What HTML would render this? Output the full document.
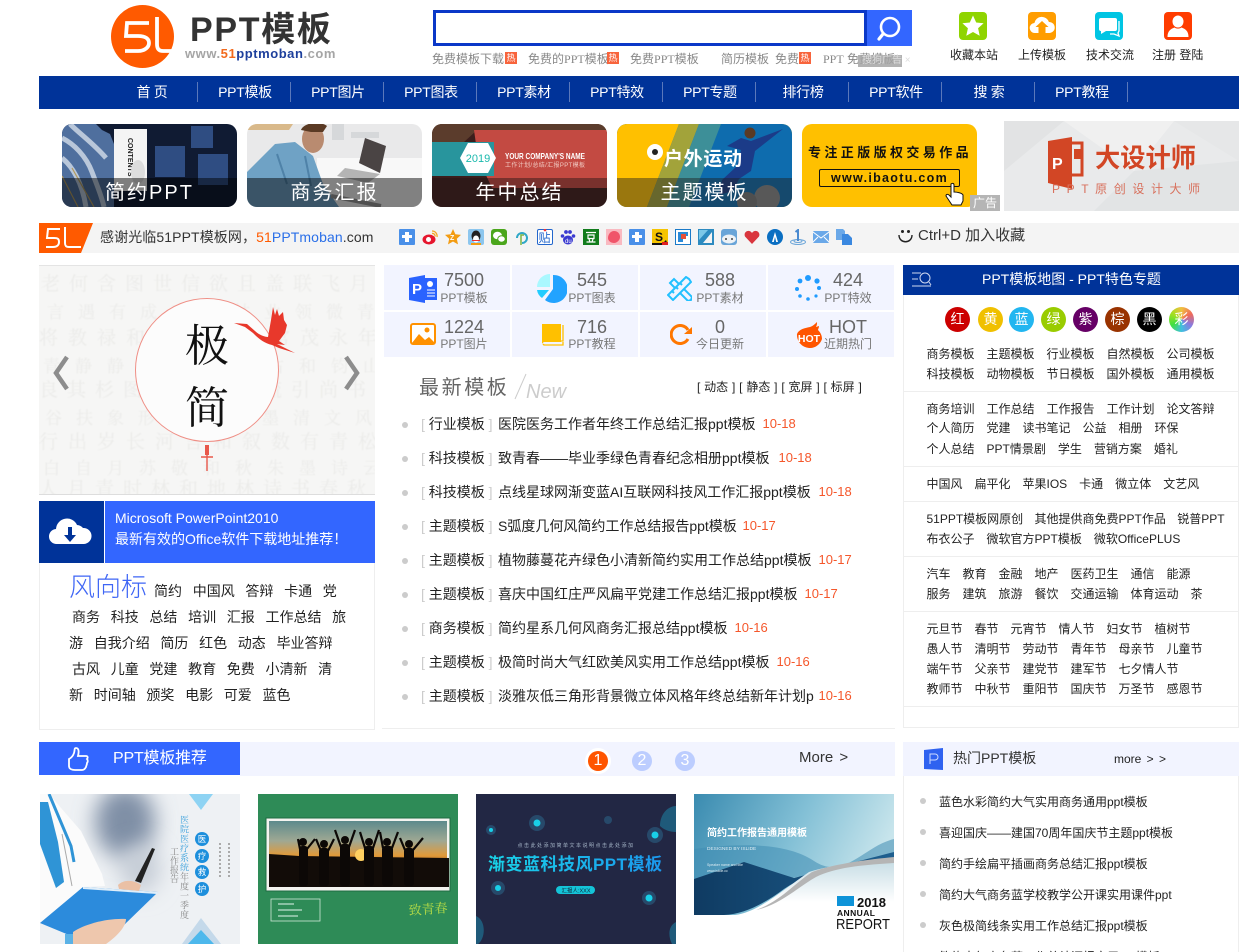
<!DOCTYPE html>
<html lang="zh"><head><meta charset="utf-8"><title>PPT模板</title>
<style>
html,body{margin:0;padding:0;background:#fff;overflow:hidden}
body{width:1257px;height:952px;position:relative;font-family:"Liberation Sans","Noto Sans CJK SC",sans-serif;color:#222;font-size:12px}
.t{position:absolute;white-space:nowrap;line-height:20px;height:20px}
.b{position:absolute}
svg{position:absolute;display:block;overflow:hidden}
.nav{color:#fff;font-size:14px;transform:translateX(-50%);letter-spacing:-.3px}
.sep{position:absolute;top:82px;height:20px;width:1px;background:#5a78bb}
.cap{position:absolute;left:0;right:0;bottom:0;height:29px;background:rgba(0,0,0,.48);color:#fff;text-align:center;font-size:20px;line-height:31px;letter-spacing:2px}
.card{position:absolute;top:124px;width:175px;height:83px;border-radius:10px;overflow:hidden}
.hot{position:absolute;top:52px;width:12px;height:12px;background:#f8643c;color:#fff;font-size:9px;line-height:12px;text-align:center}
.g{color:#888;font-size:12px}
.cell{position:absolute;width:126px;height:45px;background:#f2f4ff}
.n{font-size:18px;color:#666;transform:translateX(-50%)}
.lb{font-size:12px;color:#777;transform:translateX(-50%)}
.sc{width:16px;height:16px;top:229px}
.li{font-size:14px;color:#222}
.li i{font-style:normal;color:#ccc}
.li s{text-decoration:none;position:absolute;left:341.5px;top:0;color:#f5572b;font-size:13px}
.d{position:absolute;width:6px;height:6px;border-radius:50%;background:#ccc;left:402px}
.c{position:absolute;top:307px;width:25px;height:25px;border-radius:50%;color:#fff;font-size:14px;line-height:25px;text-align:center}
.m{font-size:12px;word-spacing:8.67px;left:926.5px;color:#222}
.w{font-size:14px;word-spacing:6.8px;color:#222}
.hr{position:absolute;left:904px;width:334px;height:1px;background:#eee}
.h{font-size:12px;color:#222;left:939px}
.hd{position:absolute;left:920px;width:6px;height:6px;border-radius:50%;background:#ccc}
</style></head><body>

<!-- logo -->
<div class="b" style="left:111px;top:5px;width:63px;height:63px;border-radius:50%;background:#ff5a00"></div>
<svg style="left:111px;top:5px" width="63" height="63" viewBox="0 0 63 63"><path d="M38 18H16l-1 13h12c8 0 11 3 11 7s-4 8-11 8H14M46 12v27c0 5 2 7 6 7h11" fill="none" stroke="#fff" stroke-width="3.800"/></svg>
<div class="t" style="left:190px;top:12px;height:36px;line-height:36px;font-size:34px;font-weight:bold;color:#333;letter-spacing:1.700px">PPT模板</div>
<div class="t" style="left:185px;top:44px;font-size:13px;font-weight:bold;color:#a5a5a5;letter-spacing:.55px">www.<span style="color:#f26a1d">51</span><span style="color:#1d3f9c">pptmoban</span>.com</div>

<!-- search -->
<div class="b" style="left:433px;top:10px;width:428px;height:30px;border:3px solid #0a38c8;background:#fff"></div>
<div class="b" style="left:867px;top:10px;width:45px;height:36px;background:#3366ff"></div>
<svg style="left:867px;top:10px" width="45" height="36" viewBox="0 0 45 36"><circle cx="23" cy="17" r="9" fill="none" stroke="#fff" stroke-width="2.600"/><path d="M16 24l-4 5" stroke="#fff" stroke-width="3.200" stroke-linecap="round"/></svg>
<div class="t g" style="left:432px;top:49px">免费模板下载</div><div class="hot" style="left:505px">热</div>
<div class="t g" style="left:528px;top:49px">免费的<span style="font-family:'Liberation Serif',serif">PPT</span>模板</div><div class="hot" style="left:607px">热</div>
<div class="t g" style="left:630px;top:49px">免费<span style="font-family:'Liberation Serif',serif">PPT</span>模板</div>
<div class="t g" style="left:721px;top:49px">简历模板</div>
<div class="t g" style="left:775px;top:49px">免费</div><div class="hot" style="left:799px">热</div>
<div class="t g" style="left:823px;top:49px"><span style="font-family:'Liberation Serif',serif">PPT</span></div>
<div class="t g" style="left:847px;top:49px">免费模板</div>
<div class="b" style="left:858px;top:55px;width:44px;height:12px;background:rgba(165,165,165,.85)"></div>
<div class="t" style="left:862px;top:51px;color:#ddd;font-size:10px">搜狗广告 ×</div>

<!-- top right icons -->
<svg style="left:959px;top:12px" width="28" height="28" viewBox="0 0 28 28"><rect width="28" height="28" rx="4" fill="#8fd400"/><path d="M14 3.500l3.200 7 7.400.8-5.500 5 1.600 7.400L14 20l-6.700 3.700 1.600-7.400-5.500-5 7.400-.8z" fill="#fff"/></svg>
<svg style="left:1028px;top:12px" width="28" height="28" viewBox="0 0 28 28"><rect width="28" height="28" rx="4" fill="#ff9d00"/><path d="M7 21a5 5 0 0 1-.6-10 7.500 7.500 0 0 1 14.500-1 5.500 5.500 0 0 1 .6 11h-4v-6h3l-6.500-6-6.500 6h3v6z" fill="#fff"/></svg>
<svg style="left:1095px;top:12px" width="28" height="28" viewBox="0 0 28 28"><rect width="28" height="28" rx="4" fill="#00c5e3"/><path d="M6 6h14a2 2 0 0 1 2 2v9a2 2 0 0 1-2 2h-9l-5 3v-3a2 2 0 0 1-2-2V8a2 2 0 0 1 2-2z" fill="#fff"/><path d="M24 9v10l-1 2 1 3-5-2h-4" fill="none" stroke="#fff" stroke-width="1.300"/></svg>
<svg style="left:1164px;top:12px" width="28" height="28" viewBox="0 0 28 28"><rect width="28" height="28" rx="4" fill="#ff3c00"/><ellipse cx="14" cy="9.500" rx="5.500" ry="6" fill="#fff"/><path d="M3.500 25c0-6 3-8 7-9.500 2 1.500 5 1.500 7 0 4 1.500 7 3.500 7 9.500z" fill="#fff"/></svg>
<div class="t" style="left:950px;top:45px">收藏本站</div>
<div class="t" style="left:1018px;top:45px">上传模板</div>
<div class="t" style="left:1086px;top:45px">技术交流</div>
<div class="t" style="left:1152px;top:45px">注册 登陆</div>

<!-- nav -->
<div class="b" style="left:39px;top:76px;width:1200px;height:33px;background:#003399"></div>
<div class="t nav" style="left:152px;top:82px">首 页</div>
<div class="t nav" style="left:245px;top:82px">PPT模板</div>
<div class="t nav" style="left:338px;top:82px">PPT图片</div>
<div class="t nav" style="left:431px;top:82px">PPT图表</div>
<div class="t nav" style="left:524px;top:82px">PPT素材</div>
<div class="t nav" style="left:617px;top:82px">PPT特效</div>
<div class="t nav" style="left:710px;top:82px">PPT专题</div>
<div class="t nav" style="left:803px;top:82px">排行榜</div>
<div class="t nav" style="left:896px;top:82px">PPT软件</div>
<div class="t nav" style="left:989px;top:82px">搜 索</div>
<div class="t nav" style="left:1082px;top:82px">PPT教程</div>
<div class="sep" style="left:197px"></div><div class="sep" style="left:290px"></div><div class="sep" style="left:383px"></div><div class="sep" style="left:476px"></div><div class="sep" style="left:569px"></div><div class="sep" style="left:662px"></div><div class="sep" style="left:755px"></div><div class="sep" style="left:848px"></div><div class="sep" style="left:941px"></div><div class="sep" style="left:1034px"></div><div class="sep" style="left:1127px"></div>

<!-- cards -->
<div class="card" style="left:62px;background:#101b33">
<svg width="175" height="83" viewBox="0 0 175 83"><path d="M0 0h34l6 6 8 4 4 10v63H0z" fill="#4f6f9e"/><path d="M0 14c12 6 24 18 30 34s10 25 12 35M0 34c10 8 20 24 24 49M8 0c10 10 24 20 36 34" stroke="#b9c7da" stroke-width="5" fill="none"/><path d="M0 52l16 31M10 44l22 39" stroke="#b59b5c" stroke-width="1.200" fill="none"/><rect x="52" y="5" width="33" height="62" fill="#f4f4f4"/><text x="66" y="14" transform="rotate(90 66 14)" font-size="7" font-weight="bold" fill="#222">CONTENTS</text><ellipse cx="76" cy="48" rx="7" ry="12" fill="#ddd"/><rect x="93" y="22" width="30" height="31" fill="#2f4d82"/><rect x="129" y="2" width="22" height="22" fill="#2f4d82"/><rect x="136" y="30" width="30" height="31" fill="#2f4d82"/></svg>
<div class="cap">简约PPT</div></div>
<div class="card" style="left:247px;background:#e9e9ea">
<svg width="175" height="83" viewBox="0 0 175 83"><path d="M0 0h46l-4 6H0z" fill="#d9b98a"/><path d="M85 0h12v16H85zM104 8h28v6h-28z" fill="#d6d8da"/><rect x="70" y="34" width="105" height="49" fill="#f8f8f8"/><path d="M0 83V48l28-28 20-2 18 14 10 28 16 23z" fill="#6fa2c5"/><path d="M30 30l10 30M58 32l6 30" stroke="#4f82a8" stroke-width="2" fill="none"/><ellipse cx="66" cy="15" rx="11" ry="14" fill="#b98b70"/><path d="M54 6c3-8 20-9 26-4l-4 6-12 0z" fill="#5a3a24"/><path d="M118 14l21 8-6 27-21-10z" fill="#4a4444"/><path d="M98 44l35 6-12 9-31-7z" fill="#b4b4b4"/><path d="M84 72l50 10" stroke="#999" stroke-width="4"/></svg>
<div class="cap">商务汇报</div></div>
<div class="card" style="left:432px;background:#3b1e1c">
<svg width="175" height="83" viewBox="0 0 175 83"><rect width="175" height="7" fill="#6a4a30"/><path d="M0 0h175v7H44L32 18H0z" fill="#5b3c2c"/><path d="M42 6h133v58H60L46 34z" fill="#c34a42"/><path d="M0 18h62v34H0z" fill="#28959d"/><path d="M36 19h20l8 15-8 15H36l-8-15z" fill="#fff"/><text x="46" y="38" font-size="11" fill="#1bb9ad" text-anchor="middle">2019</text><text x="73" y="35" font-size="8.500" font-weight="bold" fill="#fff" textLength="80" lengthAdjust="spacingAndGlyphs">YOUR COMPANY'S NAME</text><text x="73" y="43" font-size="6" fill="#f0c8c0" textLength="80">工作计划/总结/汇报PPT模板</text></svg>
<div class="cap" style="background:rgba(30,20,20,.45)">年中总结</div></div>
<div class="card" style="left:617px;background:#ffc000">
<svg width="175" height="83" viewBox="0 0 175 83"><rect width="175" height="83" fill="#0e6cae"/><path d="M0 0h62L30 83H0z" fill="#ffc000"/><path d="M62 0h20L50 83H30z" fill="#a2a33a"/><path d="M82 0h22L72 83H50z" fill="#3d8f98"/><circle cx="150" cy="74" r="13" fill="#888"/><circle cx="130" cy="78" r="10" fill="#777"/><path d="M105 56l15-14 4-16-14-4 14-8 10 3 32-12-28 22-4 20-12 8-6 12-14 4z" fill="#1b3b88"/><circle cx="133" cy="9" r="5.500" fill="#5a3a24"/><circle cx="38" cy="28" r="8" fill="#fff"/><circle cx="38" cy="28" r="3" fill="#222"/><text x="47" y="41" font-size="19" font-weight="bold" fill="#fff" textLength="78">户外运动</text></svg>
<div class="cap" style="background:rgba(30,30,30,.45)">主题模板</div></div>
<div class="card" style="left:802px;background:#ffc000">
<div class="t" style="left:6px;top:19px;font-size:13px;font-weight:bold;color:#111;letter-spacing:3.400px">专注正版版权交易作品</div>
<div class="b" style="left:17px;top:45px;width:139px;height:16px;border:1px solid #111;border-radius:2px;text-align:center;font-size:12.500px;font-weight:bold;line-height:17px;letter-spacing:1.300px;color:#111">www.ibaotu.com</div>
<svg style="left:143px;top:58px" width="20" height="24" viewBox="0 0 20 24"><path d="M6 2c1-1 3-1 3 1v7c3 0 8 1 9 3v6l-2 4H7l-6-9c0-2 2-2 3-1l2 2z" fill="#fff" stroke="#111" stroke-width="1"/></svg>
</div>
<div class="b" style="left:970px;top:195px;width:30px;height:16px;background:#b5b5b5;color:#fff;font-size:12px;line-height:16px;text-align:center">广告</div>
<div class="b" style="left:1004px;top:121px;width:235px;height:90px;background:#e9eaeb"></div>
<svg style="left:1004px;top:121px" width="235" height="90" viewBox="0 0 235 90"><path d="M0 0h60L0 50z" fill="#e2e3e4"/><path d="M60 0h110l-40 50z" fill="#f0f0f0"/><path d="M170 0h65v40z" fill="#e6e7e8"/><path d="M130 50l105-10v50H90z" fill="#e2e4e5"/><path d="M44 20l24-4v52l-24-6z" fill="#d24625"/><text x="48" y="48" font-size="16" font-weight="bold" fill="#fff">P</text><path d="M68 22h10v32H68" fill="none" stroke="#d24625" stroke-width="3"/><rect x="70" y="28" width="8" height="10" fill="#d24625"/><text x="91" y="46" font-size="26" font-weight="bold" fill="#d24625" textLength="101" lengthAdjust="spacingAndGlyphs">大设计师</text></svg>
<div class="t" style="left:1052px;top:179px;font-size:12px;color:#d8705c;letter-spacing:6.600px">PPT原创设计大师</div>

<!-- welcome bar -->
<div class="b" style="left:39px;top:223px;width:1200px;height:30px;background:#f4f4f4"></div>
<svg style="left:39px;top:223px" width="54" height="30" viewBox="0 0 54 30"><path d="M0 0h54L42 30H0z" fill="#ff5a00"/><path d="M21 6H9L8 15h7c4 0 5 1 5 4s-2 5-6 5H7M26 4v16c0 3 1 4 4 4h12" fill="none" stroke="#fff" stroke-width="2"/></svg>
<div class="t" style="left:100px;top:227px;font-size:14px;color:#333;letter-spacing:.1px">感谢光临51PPT模板网，<span style="color:#ff5a00">51</span><span style="color:#2a6fe8">PPTmoban</span>.com</div>

<!-- share icons -->
<svg class="sc" style="left:399px" viewBox="0 0 16 16"><rect width="16" height="16" rx="1" fill="#4a90e8"/><path d="M6 3h4v3h3v3h-3v4H6V9H3V6h3z" fill="#fff"/></svg>
<svg class="sc" style="left:422px" viewBox="0 0 16 16"><ellipse cx="7" cy="10.500" rx="6.500" ry="5" fill="#e6162d"/><circle cx="6.500" cy="10.500" r="2.500" fill="#fff"/><path d="M10 2a5 5 0 0 1 5 6M10 4.500a2.500 2.500 0 0 1 3 3" fill="none" stroke="#f5a623" stroke-width="1.300"/></svg>
<svg class="sc" style="left:445px" viewBox="0 0 16 16"><path d="M8 0l2.400 5.300 5.600.6-4.200 3.800 1.200 5.700L8 12.500l-5 2.900 1.200-5.700L0 5.900l5.600-.6z" fill="#f39c12"/><text x="5" y="11" font-size="7" font-weight="bold" fill="#fff">Z</text></svg>
<svg class="sc" style="left:468px" viewBox="0 0 16 16"><rect width="16" height="16" rx="2" fill="#8cc6ee"/><ellipse cx="8" cy="7" rx="4.500" ry="5.500" fill="#222"/><ellipse cx="8" cy="10" rx="3" ry="3.500" fill="#fff"/><path d="M3 14h10v2H3z" fill="#f39c12"/><path d="M4 11h8v1H4z" fill="#e33"/></svg>
<svg class="sc" style="left:491px" viewBox="0 0 16 16"><rect width="16" height="16" rx="3" fill="#4ba61c"/><ellipse cx="6.500" cy="6.500" rx="4.500" ry="3.800" fill="#fff"/><ellipse cx="10.500" cy="10" rx="3.800" ry="3.200" fill="#fff" stroke="#4ba61c"/></svg>
<svg class="sc" style="left:514px" viewBox="0 0 16 16"><path d="M3 9a5 5 0 1 1 5 5" fill="none" stroke="#2fa7c7" stroke-width="2"/><path d="M7 16V6h3" fill="none" stroke="#7cb342" stroke-width="1.500"/></svg>
<svg class="sc" style="left:537px" viewBox="0 0 16 16"><rect x=".5" y=".5" width="15" height="15" rx="1.500" fill="#fff" stroke="#2266cc"/><circle cx="8" cy="1" r="1.300" fill="#e33"/><text x="1.500" y="13" font-size="12" fill="#2266cc">贴</text></svg>
<svg class="sc" style="left:560px" viewBox="0 0 16 16"><ellipse cx="8" cy="11" rx="5" ry="4.500" fill="#3a3ad0"/><circle cx="2.500" cy="7" r="1.800" fill="#3a3ad0"/><circle cx="6" cy="3" r="1.900" fill="#3a3ad0"/><circle cx="10" cy="3" r="1.900" fill="#3a3ad0"/><circle cx="13.500" cy="7" r="1.800" fill="#3a3ad0"/><text x="5" y="14" font-size="6" fill="#fff">du</text></svg>
<svg class="sc" style="left:583px" viewBox="0 0 16 16"><rect width="16" height="16" fill="#127c1c"/><path d="M3 3.500h10M5 6h6v3.500H5zM3.500 13h9M6 10l1 3M10 10l-1 3" stroke="#fff" stroke-width="1.200" fill="none"/></svg>
<svg class="sc" style="left:606px" viewBox="0 0 16 16"><rect width="16" height="16" fill="#f9b9c0"/><path d="M8 2c4 0 6 3 6 6s-3 6-6 6-6-2-6-5c0-4 3-7 6-7z" fill="#f0556a"/></svg>
<svg class="sc" style="left:629px" viewBox="0 0 16 16"><rect width="16" height="16" rx="1" fill="#4a90e8"/><path d="M6 3h4v3h3v3h-3v4H6V9H3V6h3z" fill="#fff"/></svg>
<svg class="sc" style="left:652px" viewBox="0 0 16 16"><rect width="16" height="16" fill="#f5c400"/><text x="3" y="12" font-size="12" font-weight="bold" fill="#111">S</text><path d="M0 14h11l3-3 2 5H0z" fill="#111"/><path d="M10 13h6v3h-6z" fill="#e02020"/></svg>
<svg class="sc" style="left:675px" viewBox="0 0 16 16"><rect x=".5" y=".5" width="15" height="15" fill="#fff" stroke="#1a7ac8"/><path d="M3 3h10v4H8v6H3z" fill="#2a8ad8"/><path d="M6 5h5v5H6z" fill="#e8503a"/></svg>
<svg class="sc" style="left:698px" viewBox="0 0 16 16"><rect width="16" height="16" fill="#2d8bc0"/><path d="M5 14L14 3v11z" fill="#f4f4f4"/><path d="M1 1h9L1 11z" fill="#7cc8e8"/></svg>
<svg class="sc" style="left:721px" viewBox="0 0 16 16"><rect width="16" height="16" rx="3" fill="#69a5d8"/><ellipse cx="8" cy="10" rx="7" ry="4.500" fill="#eef2f5"/><circle cx="5" cy="10" r="1" fill="#444"/><circle cx="11" cy="10" r="1" fill="#444"/></svg>
<svg class="sc" style="left:744px" viewBox="0 0 16 16"><path d="M8 15L1 7.500C-1 3 5-.5 8 4c3-4.500 9-1 7 3.500z" fill="#d9363e"/></svg>
<svg class="sc" style="left:767px" viewBox="0 0 16 16"><circle cx="8" cy="8" r="8" fill="#0a6fc2"/><path d="M8 3L5 13h1.800L8 8l1.200 5H11z" fill="#fff"/></svg>
<svg class="sc" style="left:790px" viewBox="0 0 16 16"><ellipse cx="8" cy="13" rx="7.500" ry="2.500" fill="none" stroke="#6ba5d8"/><ellipse cx="8" cy="12" rx="4" ry="1.500" fill="none" stroke="#6ba5d8"/><path d="M8 12V1L5.500 3" fill="none" stroke="#4a8ad0" stroke-width="2"/></svg>
<svg class="sc" style="left:813px" viewBox="0 0 16 16"><rect y="2" width="16" height="12" rx="1" fill="#6aa8e8"/><path d="M0 3l8 6 8-6M0 13l5-5M16 13l-5-5" fill="none" stroke="#fff"/></svg>
<svg class="sc" style="left:836px" viewBox="0 0 16 16"><path d="M0 0h7l2 2v9H0z" fill="#6aa8e8"/><path d="M6 5h6l4 4v7H6z" fill="#3a88e0"/></svg>
<svg style="left:898px;top:228px" width="15" height="16" viewBox="0 0 15 16"><path d="M1 7c0 9 13 9 13 0" fill="none" stroke="#222" stroke-width="1.400"/><circle cx="4.500" cy="3.500" r="1.500" fill="#222"/><circle cx="10.500" cy="3.500" r="1.500" fill="#222"/></svg>
<div class="t" style="left:918px;top:226px;font-size:15px;color:#333">Ctrl+D 加入收藏</div>

<!-- slider -->
<div class="b" style="left:39px;top:265px;width:336px;height:230px;background:#f6f6f5;border-top:1px solid #e4e4e4;border-bottom:1px solid #ddd;box-sizing:border-box;overflow:hidden">
<svg width="336" height="230" viewBox="0 0 336 230" font-family="'Noto Serif CJK SC',serif" font-size="19" fill="#ebebe9" style="filter:blur(.5px)">
<text x="2" y="24" letter-spacing="9">老何含图世信欲且盖联飞月诗</text>
<text x="8" y="52" letter-spacing="14" font-size="17">言遇有成事路林业领微青</text>
<text x="0" y="78" letter-spacing="10">将教禄和气路花安常茂永年</text>
<text x="4" y="106" letter-spacing="15" font-size="17">青静静数古今多右和钧山</text>
<text x="0" y="130" letter-spacing="9">良其杉图散风雅云流引尚书</text>
<text x="6" y="158" letter-spacing="14" font-size="17">谷扶象形书法翰墨清文风</text>
<text x="0" y="182" letter-spacing="10">行出岁长河言和叙数有青松</text>
<text x="4" y="208" letter-spacing="15" font-size="17">白自月苏敬和秋朱墨诗云</text>
<text x="0" y="229" letter-spacing="9">人月青时林和地林诗书春秋</text>
</svg></div>
<svg style="left:39px;top:265px" width="336" height="230" viewBox="0 0 336 230">
<circle cx="168" cy="105" r="71.500" fill="#fcfcfc" stroke="#ef8f86" stroke-width="1"/>
<path d="M195 58L208 59L216 66C220 70 226 72 229 72L232 55L234 42L236 50L238 44L240 51L244 47L245 55L248 60L246 68L240 76L246 80L238 79L256 88L240 83L233 80C225 78 220 74 214 68L206 62Z" fill="#e8382b"/>
<path d="M166 180h4v10h-4z" fill="#e8584b"/><path d="M162 192h12M168 190v16" stroke="#e8584b" stroke-width="1.400" fill="none"/>
<path d="M28 92L17 108l11 16" fill="none" stroke="#8d8d8d" stroke-width="4.500"/>
<path d="M307 92l11 16-11 16" fill="none" stroke="#8d8d8d" stroke-width="4.500"/>
</svg>
<div class="t" style="left:185px;top:317px;height:50px;line-height:50px;font-size:44px;color:#111;font-family:'Noto Serif CJK SC',serif">极</div>
<div class="t" style="left:185px;top:379px;height:50px;line-height:50px;font-size:44px;color:#111;font-family:'Noto Serif CJK SC',serif">简</div>

<!-- download -->
<div class="b" style="left:39px;top:501px;width:65px;height:62px;background:#003399"></div>
<div class="b" style="left:105px;top:501px;width:270px;height:62px;background:#3366ff"></div>
<svg style="left:48px;top:516px" width="44" height="32" viewBox="0 0 44 32"><path d="M9 28a7.500 7.500 0 0 1-1-15 11 11 0 0 1 21-4 9 9 0 0 1 6 3 8 8 0 0 1 1 16z" fill="#fff"/><path d="M20 11h4v8h4l-6 7-6-7h4z" fill="#003399"/></svg>
<div class="t" style="left:115px;top:508px;font-size:14px;color:#fff">Microsoft PowerPoint2010</div>
<div class="t" style="left:115px;top:529px;font-size:14px;color:#fff">最新有效的Office软件下载地址推荐！</div>
<div class="b" style="left:39px;top:563px;width:336px;height:167px;border:1px solid #eee;border-top:0;box-sizing:border-box"></div>
<div class="t" style="left:69px;top:572px;height:30px;line-height:30px;font-size:26px;color:#3f66f5;font-weight:300">风向标</div>
<div class="t w" style="left:154px;top:581px">简约 中国风 答辩 卡通 党</div>
<div class="t w" style="left:72px;top:607px">商务 科技 总结 培训 汇报 工作总结 旅</div>
<div class="t w" style="left:69px;top:633px">游 自我介绍 简历 红色 动态 毕业答辩</div>
<div class="t w" style="left:72px;top:659px">古风 儿童 党建 教育 免费 小清新 清</div>
<div class="t w" style="left:69px;top:685px">新 时间轴 颁奖 电影 可爱 蓝色</div>

<!-- stats -->
<div class="cell" style="left:384px;top:265px"></div><div class="cell" style="left:512px;top:265px"></div><div class="cell" style="left:640px;top:265px"></div><div class="cell" style="left:768px;top:265px"></div>
<div class="cell" style="left:384px;top:312px"></div><div class="cell" style="left:512px;top:312px"></div><div class="cell" style="left:640px;top:312px"></div><div class="cell" style="left:768px;top:312px"></div>
<div class="t n" style="left:464px;top:270px">7500</div><div class="t lb" style="left:464px;top:288px">PPT模板</div>
<div class="t n" style="left:592px;top:270px">545</div><div class="t lb" style="left:592px;top:288px">PPT图表</div>
<div class="t n" style="left:720px;top:270px">588</div><div class="t lb" style="left:720px;top:288px">PPT素材</div>
<div class="t n" style="left:848px;top:270px">424</div><div class="t lb" style="left:848px;top:288px">PPT特效</div>
<div class="t n" style="left:464px;top:317px">1224</div><div class="t lb" style="left:464px;top:334px">PPT图片</div>
<div class="t n" style="left:592px;top:317px">716</div><div class="t lb" style="left:592px;top:334px">PPT教程</div>
<div class="t n" style="left:720px;top:317px">0</div><div class="t lb" style="left:720px;top:334px">今日更新</div>
<div class="t n" style="left:848px;top:317px">HOT</div><div class="t lb" style="left:848px;top:334px">近期热门</div>

<svg style="left:409px;top:275px" width="28" height="28" viewBox="0 0 28 28"><path d="M0 3l16-3v28L0 25z" fill="#2962ff"/><text x="3" y="19" font-size="15" font-weight="bold" fill="#fff">P</text><rect x="16" y="3" width="12" height="22" fill="#2962ff"/><circle cx="21" cy="9" r="3" fill="#fff"/><path d="M18 15h8M18 18h8M18 21h8" stroke="#fff"/></svg>
<svg style="left:537px;top:274px" width="30" height="30" viewBox="0 0 30 30"><path d="M16 1a14 14 0 1 1-8 25l8-11z" fill="#22a3ff"/><path d="M13 0v13H0A13 13 0 0 1 13 0z" fill="#aaf8ff"/><path d="M0 16h12l-7 8a12 12 0 0 1-5-8z" fill="#22ccff"/></svg>
<svg style="left:667px;top:276px" width="25" height="25" viewBox="0 0 25 25" fill="none" stroke="#22c0ff" stroke-width="2"><path d="M3 7l4-4 18 18-1 3-3 1z"/><path d="M22 3l-3-2-18 18 5 5 18-18z" fill="#f2f4ff"/><path d="M5 15l2 2M9 11l2 2M13 7l2 2"/></svg>
<svg style="left:795px;top:275px" width="26" height="27" viewBox="0 0 26 27" fill="#1f9bff"><circle cx="13" cy="3" r="3"/><circle cx="22" cy="6" r="2.600"/><circle cx="24" cy="13" r="2"/><circle cx="21" cy="21" r="1.600"/><circle cx="13" cy="24" r="1.800"/><circle cx="5" cy="21" r="1.800"/><circle cx="2" cy="14" r="2"/><circle cx="5" cy="6" r="2.400"/></svg>
<svg style="left:410px;top:323px" width="26" height="22" viewBox="0 0 26 22"><rect x="1" y="1" width="24" height="20" rx="2" fill="#fff" stroke="#ff9100" stroke-width="2"/><circle cx="17" cy="7" r="2.500" fill="#ff9100"/><path d="M2 20l7-9 6 6 4-3 5 5v1H2z" fill="#ff9100"/></svg>
<svg style="left:542px;top:324px" width="22" height="22" viewBox="0 0 22 22"><path d="M0 0h19v18H3a3 3 0 0 0-3 2z" fill="#ffc000"/><path d="M0 19a3 3 0 0 1 3-2h18V1M1 20a2 2 0 0 0 2 1h18v-3" fill="none" stroke="#ffc000" stroke-width="1.300"/></svg>
<svg style="left:670px;top:324px" width="23" height="22" viewBox="0 0 23 22"><path d="M18 15a9 9 0 1 1 0-9" fill="none" stroke="#ff7700" stroke-width="3"/><path d="M22 3v7h-8z" fill="#ff7700"/></svg>
<svg style="left:796px;top:322px" width="26" height="26" viewBox="0 0 26 26"><path d="M13 26A13 13 0 0 1 1 12C3 7 9 6 14 5c3-1 5-3 7-5 0 2 0 3-1 5l3-1c0 2-1 3-1 4 3 3 4 6 4 9a13 13 0 0 1-13 9z" fill="#ff5500"/><text x="13" y="20" font-size="10.500" font-weight="bold" fill="#fff" text-anchor="middle">HOT</text></svg>

<!-- latest -->
<div class="t" style="left:419px;top:373px;height:30px;line-height:30px;font-size:20px;color:#666;letter-spacing:2.600px">最新模板</div>
<svg style="left:514px;top:373px" width="14" height="27" viewBox="0 0 14 27"><path d="M12 1L1 26" stroke="#ccc"/></svg>
<div class="t" style="left:526px;top:382px;font-size:20px;font-style:italic;color:#ccc">New</div>
<div class="t" style="left:697px;top:377px;font-size:12px;color:#222;word-spacing:.5px">[ 动态 ] [ 静态 ] [ 宽屏 ] [ 标屏 ]</div>

<div class="d" style="top:422px"></div><div class="t li" style="left:421px;top:414px"><i>[</i> 行业模板 <i>]</i> <span style="position:absolute;left:77px">医院医务工作者年终工作总结汇报ppt模板</span><s>10-18</s></div>
<div class="d" style="top:456px"></div><div class="t li" style="left:421px;top:448px"><i>[</i> 科技模板 <i>]</i> <span style="position:absolute;left:77px">致青春——毕业季绿色青春纪念相册ppt模板</span><s style="left:357.500px">10-18</s></div>
<div class="d" style="top:490px"></div><div class="t li" style="left:421px;top:482px"><i>[</i> 科技模板 <i>]</i> <span style="position:absolute;left:77px">点线星球网渐变蓝AI互联网科技风工作汇报ppt模板</span><s style="left:397.500px">10-18</s></div>
<div class="d" style="top:524px"></div><div class="t li" style="left:421px;top:516px"><i>[</i> 主题模板 <i>]</i> <span style="position:absolute;left:77px">S弧度几何风简约工作总结报告ppt模板</span><s style="left:321.500px">10-17</s></div>
<div class="d" style="top:558px"></div><div class="t li" style="left:421px;top:550px"><i>[</i> 主题模板 <i>]</i> <span style="position:absolute;left:77px">植物藤蔓花卉绿色小清新简约实用工作总结ppt模板</span><s style="left:397.500px">10-17</s></div>
<div class="d" style="top:592px"></div><div class="t li" style="left:421px;top:584px"><i>[</i> 主题模板 <i>]</i> <span style="position:absolute;left:77px">喜庆中国红庄严风扁平党建工作总结汇报ppt模板</span><s style="left:383.500px">10-17</s></div>
<div class="d" style="top:626px"></div><div class="t li" style="left:421px;top:618px"><i>[</i> 商务模板 <i>]</i> <span style="position:absolute;left:77px">简约星系几何风商务汇报总结ppt模板</span><s style="left:313.500px">10-16</s></div>
<div class="d" style="top:660px"></div><div class="t li" style="left:421px;top:652px"><i>[</i> 主题模板 <i>]</i> <span style="position:absolute;left:77px">极简时尚大气红欧美风实用工作总结ppt模板</span><s style="left:355.500px">10-16</s></div>
<div class="d" style="top:694px"></div><div class="t li" style="left:421px;top:686px"><i>[</i> 主题模板 <i>]</i> <span style="position:absolute;left:77px">淡雅灰低三角形背景微立体风格年终总结新年计划p</span><s style="left:397.500px">10-16</s></div>
<div class="b" style="left:382px;top:728px;width:513px;height:1px;background:#eee"></div>

<!-- sidebar -->
<div class="b" style="left:903px;top:265px;width:336px;height:30px;background:#003399"></div>
<svg style="left:911px;top:271px" width="22" height="18" viewBox="0 0 22 18" fill="none" stroke="#cfd8f0"><path d="M1 2h9M1 8h6M1 15h19"/><circle cx="14" cy="7" r="5"/><path d="M18 11l2 3"/></svg>
<div class="t" style="left:982px;top:269px;font-size:14px;color:#fff">PPT模板地图 - PPT特色专题</div>
<div class="b" style="left:903px;top:295px;width:336px;height:433px;border:1px solid #eee;border-top:0;box-sizing:border-box"></div>
<div class="c" style="left:945px;background:#cc0000">红</div>
<div class="c" style="left:978px;background:#f0c000">黄</div>
<div class="c" style="left:1009px;background:#22b6f0">蓝</div>
<div class="c" style="left:1041px;background:#99cc00">绿</div>
<div class="c" style="left:1073px;background:#660066">紫</div>
<div class="c" style="left:1105px;background:#993300">棕</div>
<div class="c" style="left:1137px;background:#000">黑</div>
<div class="c" style="left:1169px;background:conic-gradient(#f0c040,#f06a5a,#8a7ae0,#40c0e0,#40e040,#a0e020,#f0c040)">彩</div>

<div class="t m" style="top:344px">商务模板 主题模板 行业模板 自然模板 公司模板</div>
<div class="t m" style="top:364px">科技模板 动物模板 节日模板 国外模板 通用模板</div>
<div class="hr" style="top:391px"></div>
<div class="t m" style="top:399px">商务培训 工作总结 工作报告 工作计划 论文答辩</div>
<div class="t m" style="top:418px">个人简历 党建 读书笔记 公益 相册 环保</div>
<div class="t m" style="top:439px">个人总结 PPT情景剧 学生 营销方案 婚礼</div>
<div class="hr" style="top:466px"></div>
<div class="t m" style="top:474px">中国风 扁平化 苹果IOS 卡通 微立体 文艺风</div>
<div class="hr" style="top:501px"></div>
<div class="t m" style="top:509px;word-spacing:8px">51PPT模板网原创 其他提供商免费PPT作品 锐普PPT</div>
<div class="t m" style="top:529px">布衣公子 微软官方PPT模板 微软OfficePLUS</div>
<div class="hr" style="top:556px"></div>
<div class="t m" style="top:564px">汽车 教育 金融 地产 医药卫生 通信 能源</div>
<div class="t m" style="top:584px">服务 建筑 旅游 餐饮 交通运输 体育运动 茶</div>
<div class="hr" style="top:611px"></div>
<div class="t m" style="top:619px">元旦节 春节 元宵节 情人节 妇女节 植树节</div>
<div class="t m" style="top:639px">愚人节 清明节 劳动节 青年节 母亲节 儿童节</div>
<div class="t m" style="top:659px">端午节 父亲节 建党节 建军节 七夕情人节</div>
<div class="t m" style="top:679px">教师节 中秋节 重阳节 国庆节 万圣节 感恩节</div>
<div class="hr" style="top:706px"></div>

<!-- recommend -->
<div class="b" style="left:240px;top:742px;width:655px;height:34px;background:#f2f4ff"></div>
<div class="b" style="left:39px;top:742px;width:201px;height:33px;background:#3366ff"></div>
<svg style="left:66px;top:747px" width="24" height="24" viewBox="0 0 24 24"><path d="M3 12c2-1 4-3 5-6 1-3 0-5 2-5 3 0 3 4 2 8h8c2 0 2 2 1 3 1 1 1 3 0 4 0 2-1 3-1 4-1 2-2 3-4 3H9c-3 0-6-1-6-4z" fill="none" stroke="#fff" stroke-width="1.800"/></svg>
<div class="t" style="left:113px;top:749px;font-size:16px;color:#fff;letter-spacing:-.2px">PPT模板推荐</div>
<div class="b" style="left:585px;top:748px;width:26px;height:26px;border-radius:50%;background:#fff"></div>
<div class="b" style="left:588px;top:751px;width:20px;height:20px;border-radius:50%;background:#ff5500;color:#fff;font-size:16px;line-height:20px;text-align:center">1</div>
<div class="b" style="left:632px;top:751px;width:20px;height:20px;border-radius:50%;background:#bccdff;color:#fff;font-size:16px;line-height:20px;text-align:center">2</div>
<div class="b" style="left:675px;top:751px;width:20px;height:20px;border-radius:50%;background:#bccdff;color:#fff;font-size:16px;line-height:20px;text-align:center">3</div>
<div class="t" style="left:799px;top:748px;font-size:15px;color:#333;word-spacing:2px">More &gt;</div>

<!-- thumb 1 -->
<svg style="left:40px;top:794px" width="200" height="150" viewBox="0 0 200 150">
<defs><filter id="bl" x="-100%" y="-100%" width="300%" height="300%"><feGaussianBlur stdDeviation="11"/></filter></defs>
<rect width="200" height="150" fill="#eef1f4"/><ellipse cx="85" cy="28" rx="30" ry="36" fill="#7f8fa6" filter="url(#bl)"/><ellipse cx="100" cy="75" rx="20" ry="24" fill="#c5ccd6" filter="url(#bl)"/>
<path d="M0 0h9l32 37 21 43 3 12-22 1-43 36z" fill="#fbfbfb"/><path d="M0 8l8 0 10 40 6 40-8 6L0 50z" fill="#2f94d6"/><path d="M9 0l22 52 3 16" stroke="#2f94d6" stroke-width="3" fill="none"/><path d="M22 40l10 52" stroke="#aaa" stroke-width="1" fill="none"/>
<path d="M149 0h24l-12 16z" fill="#8ed3f3"/><path d="M142 150l19-26 20 26z" fill="#c4d9ea"/><path d="M148 150l13-14 13 14z" fill="#4db8ec"/>
<path d="M0 129L43 93l75 5-34 33-55 10z" fill="#2c8bdc"/><path d="M43 93l75 5-1 2-74-5z" fill="#dfeefa"/><path d="M95 87l17-33 3 1-14 34z" fill="#222"/><path d="M78 91c6-6 16-5 23 0l-2 6-20-2z" fill="#eac0a5"/><path d="M33 138c12-8 34-14 53-13 0 8-10 18-20 25H33z" fill="#eec7ad"/><rect x="25" y="140" width="8" height="10" fill="#5bb2e6"/>
<g font-family="'Noto Serif CJK SC',serif" font-size="9"><g fill="#3aa0dc"><text x="140" y="29">医</text><text x="140" y="38.500">院</text><text x="140" y="48">医</text><text x="140" y="57.500">疗</text><text x="140" y="67">系</text><text x="140" y="76.500">统</text></g><g fill="#888"><text x="140" y="86">年</text><text x="140" y="95.500">度</text><text x="140" y="105">一</text><text x="140" y="114.500">季</text><text x="140" y="124">度</text><text x="130" y="61">工</text><text x="130" y="70">作</text><text x="130" y="79">报</text><text x="130" y="88">告</text></g></g>
<g fill="#1d8fdc"><circle cx="162" cy="45" r="7"/><circle cx="162" cy="62" r="7"/><circle cx="162" cy="78" r="7"/><circle cx="162" cy="95" r="7"/></g>
<g fill="#fff" font-size="8.500" text-anchor="middle"><text x="162" y="48">医</text><text x="162" y="65">疗</text><text x="162" y="81">救</text><text x="162" y="98">护</text></g>
<path d="M180 49v34M189 49v34" stroke="#aaa" stroke-dasharray="2 2" stroke-width="2"/>
</svg>
<!-- thumb 2 -->
<svg style="left:258px;top:794px" width="200" height="150" viewBox="0 0 200 150">
<defs><linearGradient id="sky" x1="0" y1="0" x2="0" y2="1"><stop offset="0" stop-color="#5d8a8c"/><stop offset=".3" stop-color="#9fa893"/><stop offset=".52" stop-color="#e09a3a"/><stop offset=".7" stop-color="#a65c1c"/><stop offset="1" stop-color="#1a0f08"/></linearGradient></defs>
<rect width="200" height="150" fill="#2e8b57"/><rect x="8" y="24" width="184" height="73" fill="#f4f4f0" stroke="#1e6b42"/><rect x="11" y="27" width="178" height="66" fill="url(#sky)"/><path d="M11 93V60l30 2 150 2v29z" fill="#120c08"/><circle cx="103" cy="61" r="6" fill="#ffd060"/>
<g fill="#0c0806"><rect x="41" y="52" width="9" height="40" rx="3"/><rect x="61" y="54" width="10" height="38" rx="3"/><rect x="82" y="50" width="10" height="42" rx="3"/><rect x="106" y="52" width="10" height="40" rx="3"/><rect x="124" y="52" width="11" height="40" rx="3"/><rect x="146" y="54" width="10" height="38" rx="3"/><circle cx="45" cy="48" r="4"/><circle cx="66" cy="50" r="4"/><circle cx="87" cy="46" r="4"/><circle cx="111" cy="48" r="4"/><circle cx="129" cy="48" r="4"/><circle cx="151" cy="50" r="4"/></g>
<path d="M42 55l-2-10M49 55l8-10M63 57l-5-12M70 57l6-12M83 53l-6-17M91 53l6-17M107 54l-5-16M115 54l6-18M125 54l-3-16M134 54l6-16M147 56l-5-12M155 56l10-12" stroke="#0c0806" stroke-width="2.200"/>
<rect x="13" y="105" width="49" height="22" fill="none" stroke="#cde6d8" stroke-width=".8"/><path d="M20 110h16M20 116h24M20 122h20" stroke="#bfe0cf" stroke-width="1.200"/>
<text x="151" y="121" font-family="'Noto Serif CJK SC',serif" font-size="13" fill="#b6dc46" transform="rotate(-4 151 121)">致青春</text>
</svg>
<!-- thumb 3 -->
<svg style="left:476px;top:794px" width="200" height="150" viewBox="0 0 200 150">
<rect width="200" height="150" fill="#222744"/><path d="M200 12c-8 0-16 8-16 20 4 4 10 6 16 6zM0 122c10 4 10 22 2 28H0zM200 128c-8 4-8 14-4 22h4z" fill="#1f5a7a"/>
<circle cx="61" cy="29" r="8" fill="#27496a"/><circle cx="61" cy="29" r="3.500" fill="#19d0e8"/><circle cx="15" cy="36" r="5" fill="#27496a"/><circle cx="15" cy="36" r="2" fill="#19d0e8"/><circle cx="132" cy="26" r="4" fill="#27496a"/><circle cx="179" cy="41" r="8" fill="#27496a"/><circle cx="179" cy="41" r="3.500" fill="#19d0e8"/><circle cx="22" cy="94" r="7" fill="#27496a"/><circle cx="22" cy="94" r="3" fill="#19d0e8"/><circle cx="173" cy="104" r="7" fill="#27496a"/><circle cx="173" cy="104" r="3.500" fill="#19d0e8"/>
<text x="100" y="53" text-anchor="middle" font-size="5" fill="#a6b6c8" letter-spacing="1.500">点击此处添加简单文本说明点击此处添加</text>
<defs><linearGradient id="cy" x1="0" y1="0" x2="1" y2="0"><stop offset="0" stop-color="#19d3e8"/><stop offset="1" stop-color="#1b98ee"/></linearGradient></defs>
<text x="12" y="76" font-size="17" font-weight="bold" fill="url(#cy)" textLength="174">渐变蓝科技风PPT模板</text>
<rect x="80" y="92" width="39" height="8" rx="4" fill="#14c4d8"/><text x="100" y="98.500" text-anchor="middle" font-size="5.500" fill="#123">汇报人:XXX</text>
</svg>
<!-- thumb 4 -->
<svg style="left:694px;top:794px" width="200" height="150" viewBox="0 0 200 150">
<defs><linearGradient id="b4" x1="0" y1="0" x2="1" y2=".3"><stop offset="0" stop-color="#3a8bb0"/><stop offset=".55" stop-color="#83c0d6"/><stop offset="1" stop-color="#c8e5ec"/></linearGradient><linearGradient id="b5" x1="0" y1="0" x2="1" y2="0"><stop offset="0" stop-color="#0f3b62"/><stop offset="1" stop-color="#1e5f8f"/></linearGradient><linearGradient id="b6" x1="0" y1="0" x2="0" y2="1"><stop offset="0" stop-color="#c5dce4"/><stop offset=".5" stop-color="#fff"/></linearGradient></defs>
<rect width="200" height="122" fill="url(#b4)"/>
<path d="M0 55c40-5 90-8 120 12s50-15 80-22v22L0 100z" fill="#3f8db3" opacity=".55"/>
<path d="M0 85L50 68l50 16 100-26v12C150 70 120 75 90 95 70 110 50 120 30 121H0z" fill="url(#b5)"/>
<path d="M41 121C65 118 90 95 115 78 140 70 170 68 200 66v84H0v-29z" fill="url(#b6)"/>
<path d="M62 116C85 108 100 90 118 78 140 70 170 66 200 63v6c-30 2-58 4-78 14-18 10-36 28-60 33z" fill="#b5b5b5"/>
<text x="13" y="42" font-size="10" font-weight="bold" fill="#fff">简约工作报告通用模板</text>
<text x="13" y="56" font-size="4.800" fill="#e0eef4">DESIGNED BY ISLIDE</text>
<text x="13" y="72" font-size="3.500" fill="#dcecf2">Speaker name and title</text><text x="13" y="78" font-size="3.500" fill="#dcecf2">www.islide.cc</text>
<rect x="143" y="102" width="17" height="10" fill="#0e93d8"/><text x="163" y="113" font-size="13" font-weight="bold" fill="#111">2018</text><text x="143" y="122" font-size="8.500" font-weight="bold" fill="#111" textLength="38">ANNUAL</text><text x="142" y="135" font-size="15" fill="#111" textLength="54" lengthAdjust="spacingAndGlyphs">REPORT</text>
</svg>

<!-- hot -->
<div class="b" style="left:903px;top:742px;width:336px;height:34px;background:#f2f4ff"></div>
<svg style="left:924px;top:748px" width="20" height="22" viewBox="0 0 20 22"><path d="M0 2l19-2v22L0 21z" fill="#2f62f0"/><path d="M6 16V6h5a2.500 2.500 0 0 1 0 6H6" fill="none" stroke="#cfdcff"/></svg>
<div class="t" style="left:953px;top:748px;font-size:14px;color:#333">热门PPT模板</div>
<div class="t" style="left:1114px;top:749px;font-size:12px;color:#222;word-spacing:2px">more &gt; &gt;</div>
<div class="b" style="left:903px;top:776px;width:336px;height:176px;border-left:1px solid #eee;border-right:1px solid #eee;box-sizing:border-box"></div>
<div class="hd" style="top:798px"></div><div class="t h" style="top:792px">蓝色水彩简约大气实用商务通用ppt模板</div>
<div class="hd" style="top:829px"></div><div class="t h" style="top:823px">喜迎国庆——建国70周年国庆节主题ppt模板</div>
<div class="hd" style="top:860px"></div><div class="t h" style="top:854px">简约手绘扁平插画商务总结汇报ppt模板</div>
<div class="hd" style="top:891px"></div><div class="t h" style="top:885px">简约大气商务蓝学校教学公开课实用课件ppt</div>
<div class="hd" style="top:922px"></div><div class="t h" style="top:916px">灰色极简线条实用工作总结汇报ppt模板</div>
<div class="t h" style="top:947px">简约大气商务蓝工作总结汇报实用ppt模板</div>
</body></html>
